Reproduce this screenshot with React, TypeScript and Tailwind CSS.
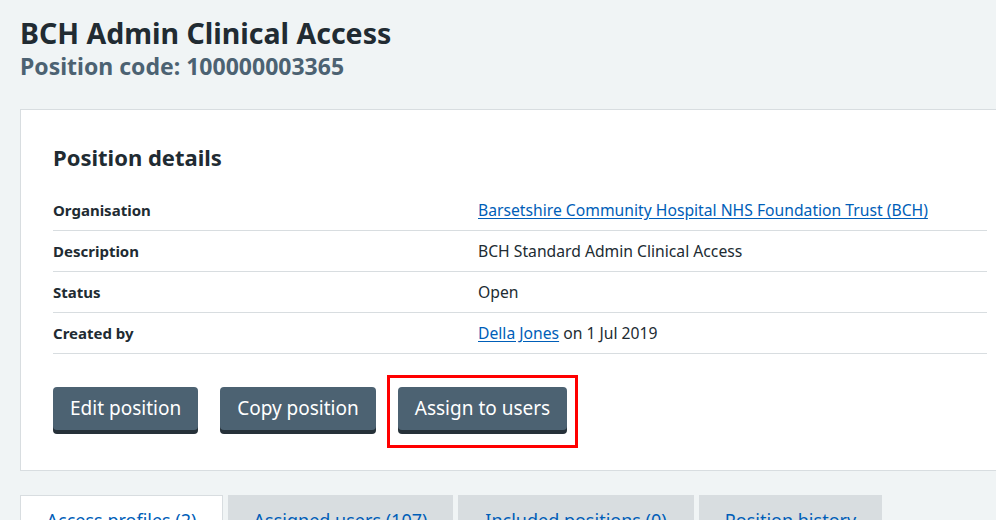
import React from "react";

const rows: { label: string; value: React.ReactNode }[] = [
  {
    label: "Organisation",
    value: (
      <a href="#" className="text-[#005eb8] underline underline-offset-2">
        Barsetshire Community Hospital NHS Foundation Trust (BCH)
      </a>
    ),
  },
  { label: "Description", value: "BCH Standard Admin Clinical Access" },
  { label: "Status", value: "Open" },
  {
    label: "Created by",
    value: (
      <>
        <a href="#" className="text-[#005eb8] underline underline-offset-2">
          Della Jones
        </a>{" "}
        on 1 Jul 2019
      </>
    ),
  },
];

function Btn({ children }: { children: React.ReactNode }) {
  return (
    <button className="h-[43px] rounded-[4px] bg-[#4c6272] px-[17px] text-[19px] leading-none text-white shadow-[0_4px_0_#263139]">
      {children}
    </button>
  );
}

export default function App() {
  return (
    <div
      className="h-[520px] w-[996px] overflow-hidden bg-[#f0f4f5] text-[#212b32]"
      style={{ fontFamily: '"Noto Sans", "Open Sans", sans-serif' }}
    >
      <div className="pl-[20px] pt-[14px]">
        <h1 className="text-[28.5px] font-bold leading-[38px]">BCH Admin Clinical Access</h1>
        <p className="text-[23px] font-bold leading-[28px] text-[#4c6272]">Position code: 100000003365</p>

        <div className="mt-[29px] w-[1000px] border border-[#d8dde0] bg-white pl-[32px] pr-[32px] pt-[32px] pb-[40px]">
          <h2 className="text-[22px] font-bold leading-[30px]">Position details</h2>
          <div className="mt-[18px]">
            {rows.map((r) => (
              <div key={r.label} className="flex border-b border-[#d8dde0] py-[8px] leading-[24px]">
                <div className="w-[425px] text-[15px] font-bold">{r.label}</div>
                <div className="text-[15.7px]">{r.value}</div>
              </div>
            ))}
          </div>
          <div className="mt-[33px] flex gap-[22px]">
            <Btn>Edit position</Btn>
            <Btn>Copy position</Btn>
            <div className="relative">
              <Btn>Assign to users</Btn>
              <div className="pointer-events-none absolute -left-[11px] -top-[12px] -right-[11px] -bottom-[18px] border-[3px] border-[#ff0000]" />
            </div>
          </div>
        </div>

        <div className="mt-[24px] flex gap-[5px] text-[18px] leading-[24px] text-[#005eb8]">
          <div className="w-[203px] border border-b-0 border-[#d8dde0] bg-white pt-[12px] text-center underline">
            Access profiles (2)
          </div>
          <div className="w-[225px] bg-[#d8dde0] pt-[13px] text-center underline">Assigned users (107)</div>
          <div className="w-[236px] bg-[#d8dde0] pt-[13px] text-center underline">Included positions (0)</div>
          <div className="w-[183px] bg-[#d8dde0] pt-[13px] text-center underline">Position history</div>
        </div>
      </div>
    </div>
  );
}
